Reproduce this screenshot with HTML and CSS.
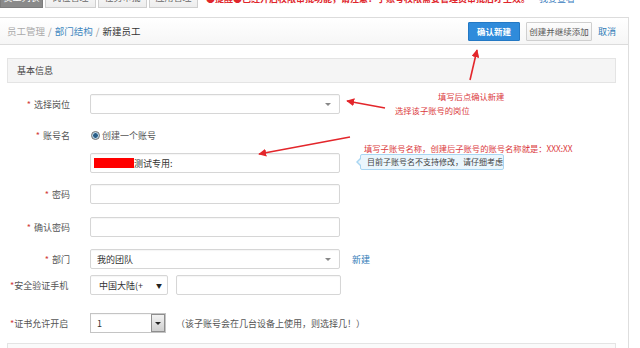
FILE: index.html
```html
<!DOCTYPE html>
<html lang="zh">
<head>
<meta charset="utf-8">
<title>新建员工</title>
<link rel="stylesheet" href="styles.css">
</head>
<body>
<div class="page">
  <div class="topnav">
    <span class="tab active">员工列表</span>
    <span class="tab">岗位管理</span>
    <span class="tab">任务审批</span>
    <span class="tab">应用管理</span>
    <span class="notice">●提醒●已经开启权限审批功能，请注意：子账号权限需要管理员审批后才生效。<a>…我要查看</a></span>
  </div>

  <div class="panel">
    <div class="crumbbar">
      <div class="crumbs">
        <span class="c-muted">员工管理</span><span class="sep">/</span><span class="c-link">部门结构</span><span class="sep">/</span><span class="c-cur">新建员工</span>
      </div>
      <div class="actions">
        <button class="btn btn-primary">确认新建</button>
        <button class="btn btn-default">创建并继续添加</button>
        <a class="link">取消</a>
      </div>
    </div>

    <div class="section-head">基本信息</div>

    <div class="form">
      <div class="row r1">
        <label class="lbl"><i>*</i>选择岗位</label>
        <div class="ctl select"><span class="caret"></span></div>
      </div>
      <div class="row r2">
        <label class="lbl"><i>*</i>账号名</label>
        <div class="radio-line"><span class="radio"></span>创建一个账号</div>
      </div>
      <div class="row r3">
        <span class="lbl"></span>
        <div class="ctl input"><span class="redact"></span>测试专用:</div>
      </div>
      <div class="row r4">
        <label class="lbl"><i>*</i>密码</label>
        <div class="ctl input"></div>
      </div>
      <div class="row r5">
        <label class="lbl"><i>*</i>确认密码</label>
        <div class="ctl input"></div>
      </div>
      <div class="row r6">
        <label class="lbl"><i>*</i>部门</label>
        <div class="ctl select">我的团队<span class="caret"></span></div>
        <a class="link new">新建</a>
      </div>
      <div class="row r7">
        <label class="lbl tight"><i>*</i>安全验证手机</label>
        <div class="ctl phone-sel">中国大陆(+<span class="tri">▼</span></div>
        <div class="ctl phone-in"></div>
      </div>
      <div class="row r8">
        <label class="lbl tight"><i>*</i>证书允许开启</label>
        <div class="ctl win-sel">1<span class="win-btn"><span class="win-tri"></span></span></div>
        <span class="hint">（该子账号会在几台设备上使用，则选择几！）</span>
      </div>
    </div>

    <div class="section-next"></div>
  </div>

  <svg class="arrows" width="640" height="348" viewBox="0 0 640 348">
    <defs>
      <marker id="ah" viewBox="0 0 10 10" refX="9" refY="5" markerWidth="5" markerHeight="5" orient="auto">
        <path d="M0 0 L10 5 L0 10 z" fill="#e3262b"/>
      </marker>
    </defs>
    <line x1="470" y1="80" x2="477" y2="50" stroke="#e3262b" stroke-width="1.6" marker-end="url(#ah)"/>
    <line x1="385" y1="108" x2="347" y2="101" stroke="#e3262b" stroke-width="1.6" marker-end="url(#ah)"/>
    <line x1="350" y1="137" x2="259" y2="154" stroke="#e3262b" stroke-width="1.6" marker-end="url(#ah)"/>
  </svg>
  <span class="note n1">填写后点确认新建</span>
  <span class="note n2">选择该子账号的岗位</span>
  <span class="note n3">填写子账号名称，创建后子账号的账号名称就是：XXX:XX</span>
  <div class="tip">目前子账号名不支持修改，请仔细考虑</div>
</div>
</body>
</html>
```

FILE: styles.css
```css
* { box-sizing: border-box; }
html, body { margin: 0; padding: 0; }
body {
  width: 640px;
  height: 348px;
  overflow: hidden;
  background: #fff;
  font-family: "Noto Sans CJK SC", "Noto Sans", sans-serif;
  font-size: 9px;
  color: #444;
}
.page { position: relative; width: 640px; height: 348px; overflow: hidden; }

.topnav {
  display: flex;
  align-items: flex-end;
  gap: 2px;
  height: 20px;
  margin-top: -12px;
}
.tab {
  height: 20px;
  width: 49px;
  border: 1px solid #cfcfcf;
  background: linear-gradient(#fdfdfd, #ededed);
  color: #666;
  font-size: 9px;
  line-height: 18px;
  text-align: center;
}
.tab.active { width: 43px; background: #8a8a8a; border-color: #7c7c7c; color: #fff; }
.tab:nth-child(2) { width: 51px; }
.notice { margin-left: 6px; color: #e0262c; font-size: 9px; line-height: 18px; white-space: nowrap; font-weight: bold; }
.notice a { color: #3b80c0; font-weight: normal; }

.panel {
  width: 629px;
  height: 340px;
  margin-top: 9px;
  border-top: 1px solid #dcdcdc;
  border-right: 1px solid #dedede;
}
.crumbbar {
  display: flex;
  align-items: center;
  justify-content: space-between;
  height: 27px;
  padding: 0 12px 0 7px;
  background: linear-gradient(#ffffff, #f6f6f6);
  border-bottom: 1px solid #dcdcdc;
}
.crumbs { font-size: 9.5px; display: flex; align-items: center; }
.c-muted { color: #aaa; }
.c-link { color: #3f88c0; }
.c-cur { color: #333; }
.sep { color: #999; margin: 0 3px; }
.actions { display: flex; align-items: center; gap: 6px; }
.btn {
  height: 19px;
  font-family: inherit;
  font-size: 8.5px;
  padding: 0;
  border-radius: 1px;
}
.btn-primary { width: 52px; background: #2f8bdb; border: 1px solid #2378c4; color: #fff; font-weight: bold; }
.btn-default { width: 66px; background: linear-gradient(#fdfdfd, #eeeeee); border: 1px solid #cfcfcf; color: #555; }
.link { color: #2f7bb7; font-size: 9px; cursor: pointer; }
.actions .link { margin-left: 0; }

.section-head {
  margin: 13px 12px 0 7px;
  height: 25px;
  padding-left: 9px;
  line-height: 23px;
  background: #f5f5f5;
  border: 1px solid #e4e4e4;
  font-size: 9px;
  color: #444;
}

.form { display: flex; flex-direction: column; }
.row { display: flex; align-items: center; gap: 0; }
.lbl {
  width: 70px;
  margin-right: 20px;
  text-align: right;
  color: #555;
  font-size: 9px;
  flex: none;
}
.lbl i { font-style: normal; color: #d23b3b; margin-right: 3px; }
.lbl.tight { width: 60px; margin-left: 10px; text-align: left; }
.lbl.tight i { margin-right: 0; }
.r1 { margin-top: 11px; }
.r2 { margin-top: 14px; height: 14px; }
.r3 { margin-top: 11px; }
.r4 { margin-top: 11px; }
.r5 { margin-top: 13px; }
.r6 { margin-top: 12px; }
.r7 { margin-top: 6px; }
.r8 { margin-top: 18px; }

.ctl {
  height: 20px;
  border: 1px solid #d6d6d6;
  border-radius: 2px;
  background: #fff;
  box-shadow: inset 0 1px 1px rgba(0,0,0,0.04);
  display: flex;
  align-items: center;
  padding-left: 6px;
  color: #333;
  font-size: 9px;
  position: relative;
}
.select, .input { width: 250px; }
.caret {
  position: absolute;
  right: 8px;
  top: 8px;
  border-left: 3px solid transparent;
  border-right: 3px solid transparent;
  border-top: 3px solid #888;
}
.radio-line { display: flex; align-items: center; color: #555; font-size: 9px; }
.radio {
  width: 9px; height: 9px;
  border-radius: 50%;
  border: 1px solid #6a6a6a;
  background: radial-gradient(circle, #2a5d86 0 2px, #9fc3dc 2.5px, #eef5fb 4px);
  margin: 0 2px 0 1px;
}
.redact { width: 40px; height: 10px; background: #ff0000; margin-left: -3px; }
.new { margin-left: 12px; }
.phone-sel { width: 78px; padding-left: 8px; }
.tri { position: absolute; right: 5px; top: 5px; font-size: 6px; color: #222; }
.phone-in { width: 165px; margin-left: 8px; }
.win-sel { width: 76px; height: 20px; border-radius: 0; border-color: #c4c4c4; padding-left: 6px; }
.win-btn {
  position: absolute;
  right: 0; top: 0; bottom: 0;
  width: 14px;
  background: linear-gradient(#f2f2f2, #cfcfcf);
  border: 1px solid #8e8e8e;
  display: flex;
  align-items: center;
  justify-content: center;
}
.win-tri { border-left: 3px solid transparent; border-right: 3px solid transparent; border-top: 3px solid #222; }
.hint { margin-left: 10px; color: #555; font-size: 9px; }

.section-next {
  margin: 10px 12px 0 7px;
  height: 20px;
  border: 1px solid #e4e4e4;
  background: #fafafa;
}

.arrows { position: absolute; left: 0; top: 0; pointer-events: none; }
.note { position: absolute; color: #db3a3d; font-size: 8.3px; white-space: nowrap; line-height: 10px; }
.n1 { left: 438px; top: 91px; }
.n2 { left: 395px; top: 105px; }
.n3 { left: 364px; top: 143px; }
.tip {
  position: absolute;
  left: 360px;
  top: 154px;
  width: 144px;
  height: 16px;
  padding-left: 6px;
  line-height: 14px;
  font-size: 8px;
  color: #444;
  background: #eaf6fd;
  border: 1px solid #a9d6f2;
  border-radius: 2px;
  white-space: nowrap;
}
.tip::before {
  content: "";
  position: absolute;
  left: -5px; top: 3px;
  border-top: 4px solid transparent;
  border-bottom: 4px solid transparent;
  border-right: 4px solid #a9d6f2;
}
.tip::after {
  content: "";
  position: absolute;
  left: -3px; top: 4px;
  border-top: 3px solid transparent;
  border-bottom: 3px solid transparent;
  border-right: 3px solid #eaf6fd;
}
```
